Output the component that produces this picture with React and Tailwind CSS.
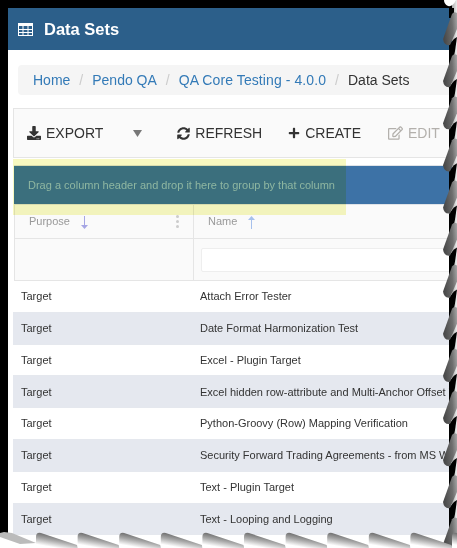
import { FaDownload, FaSyncAlt, FaPlus, FaRegEdit } from "react-icons/fa";

const rows = [
  "Attach Error Tester",
  "Date Format Harmonization Test",
  "Excel - Plugin Target",
  "Excel hidden row-attribute and Multi-Anchor Offset Value",
  "Python-Groovy (Row) Mapping Verification",
  "Security Forward Trading Agreements - from MS Word",
  "Text - Plugin Target",
  "Text - Looping and Logging",
];

// torn paper edge along the right and bottom of the shot
function TornEdge() {
  const rightTips = Array.from({ length: 13 }, (_, i) => 43 + i * 42.1);
  const bottomTips = Array.from({ length: 11 }, (_, i) => 36 + i * 41.6);
  return (
    <svg className="absolute left-0 top-0 pointer-events-none" width="457" height="548">
      <defs>
        <linearGradient id="tornR" x1="0" x2="1" y1="0.2" y2="0">
          <stop offset="0" stopColor="#4a4a4a" />
          <stop offset="0.6" stopColor="#6e6e6e" />
          <stop offset="1" stopColor="#a8a8a8" />
        </linearGradient>
        <linearGradient id="tornB" x1="0.5" x2="0" y1="0" y2="1">
          <stop offset="0.2" stopColor="#777" />
          <stop offset="0.45" stopColor="#aaa" />
          <stop offset="0.8" stopColor="#fff" />
        </linearGradient>
        <linearGradient id="sideR" x1="0" x2="1">
          <stop offset="0" stopColor="#aaa" />
          <stop offset="1" stopColor="#eee" />
        </linearGradient>
      </defs>

      <rect x="452" y="0" width="5" height="548" fill="url(#sideR)" />
      <path d="M444 0 H456 Q453 7 448 6 Q444 4 444 0 Z" fill="#fff" />
      <rect x="449" y="8" width="5" height="10" fill="#000" />

      {rightTips.map((y) => (
        <g key={y}>
          <path d={`M449 ${y + 30} L449 ${y + 2} L454 ${y - 4} L457 ${y - 6} L455 ${y + 8} L452 ${y + 22} Z`} fill="#000" />
          <path
            d={`M443 ${y - 4} L452 ${y - 29} Q454 ${y - 32} 457 ${y - 30} L457 ${y - 14} L450 ${y + 2} Q444 ${y + 3} 443 ${y - 4} Z`}
            fill="url(#tornR)"
          />
        </g>
      ))}

      <path d="M0 533 L8 533 L36 544 L36 548 L0 548 Z" fill="#fff" />
      <path d="M4 532 L12 533 L36 543 L20 544 L0 537 L0 533 Z" fill="#bbb" />
      {bottomTips.map((x) => (
        <path
          key={x}
          d={`M${x} 537 Q${x} 532 ${x + 5} 533 L${x + 41} 545 L${x + 42} 548 L${x} 548 Z`}
          fill="url(#tornB)"
        />
      ))}
    </svg>
  );
}

function ToolBtn({ icon, label, muted }) {
  return (
    <span className={`flex items-center gap-[5px] ${muted ? "text-[#b3b0ac]" : "text-[#333]"}`}>
      {icon}
      {label}
    </span>
  );
}

function TableIcon() {
  return (
    <svg width="15" height="13" viewBox="0 0 15 13" className="shrink-0">
      <rect x="0.5" y="0.5" width="14" height="12" fill="none" stroke="#fff" />
      <rect x="0" y="0" width="15" height="3" fill="#fff" />
      <path d="M5 3V13M10 3V13M0 6.5H15M0 9.5H15" stroke="#fff" fill="none" />
    </svg>
  );
}

function SortArrow({ up, color }) {
  return (
    <svg width="9" height="13" viewBox="0 0 9 13" className={up ? "" : "rotate-180"}>
      <path d="M4.5 1V13" stroke={color} strokeWidth="1" />
      <path d="M4.5 0L8 4H1Z" fill={color} />
    </svg>
  );
}

export default function App() {
  return (
    <div className="relative w-[457px] h-[548px] overflow-hidden bg-black pl-2 pt-2 font-['Liberation_Sans',sans-serif]">
      <div className="w-[449px] h-[540px] bg-white overflow-hidden">
        <div className="h-[42px] bg-[#2c5f8a] flex items-center pl-[10px] gap-[11px] text-white">
          <TableIcon />
          <span className="text-[16.5px] font-bold">Data Sets</span>
        </div>

        <div className="ml-[10px] mt-[15px] h-[30px] w-[480px] bg-[#f5f5f5] rounded flex items-center pl-[15px] text-[14px] text-[#337ab7] whitespace-nowrap">
          <span>Home</span>
          <span className="text-[#ccc] px-[9px]">/</span>
          <span>Pendo QA</span>
          <span className="text-[#ccc] px-[9px]">/</span>
          <span className="tracking-[0.09px]">QA Core Testing - 4.0.0</span>
          <span className="text-[#ccc] px-[9px]">/</span>
          <span className="text-[#333]">Data Sets</span>
        </div>

        <div className="ml-[5px] mt-[13px] w-[500px] h-[50px] bg-[#fafafa] border border-[#e5e5e5] flex items-center pl-[13px] text-[14px] whitespace-nowrap">
          <ToolBtn icon={<FaDownload className="w-[14px] h-[14px]" />} label="EXPORT" />
          <svg className="ml-[30px]" width="9" height="7" viewBox="0 0 9 7"><path d="M0 0H9L4.5 7Z" fill="#777" /></svg>
          <span className="ml-[35px]"><ToolBtn icon={<FaSyncAlt className="w-[13px] h-[13px]" />} label="REFRESH" /></span>
          <span className="ml-[26px]"><ToolBtn icon={<FaPlus className="w-[12px] h-[12px]" />} label="CREATE" /></span>
          <span className="ml-[27px]"><ToolBtn icon={<FaRegEdit className="w-[15px] h-[14px]" />} label="EDIT" muted /></span>
        </div>

        <div className="ml-[6px] mt-[7px] w-[500px] h-[40px] bg-[#3d72a6] flex items-center pl-[14px] text-[11px] text-[#93bcd6] border-y border-[#dfe3e8]">
          Drag a column header and drop it here to group by that column
        </div>

        <div className="ml-[6px] w-[500px] bg-[#fafafa] text-[11px] text-[#999]">
          <div className="flex h-[34px] border-b border-[#e5e5e5]">
            <div className="w-[180px] border-r border-l border-[#e5e5e5] flex items-center pl-[14px] relative">
              Purpose
              <span className="ml-[10px] mt-[2px] flex"><SortArrow color="#a6a6e4" /></span>
              <span className="absolute right-[14px] top-[10px] flex flex-col gap-[2px]">
                <i className="w-[3px] h-[3px] rounded-full bg-[#ccc]" />
                <i className="w-[3px] h-[3px] rounded-full bg-[#ccc]" />
                <i className="w-[3px] h-[3px] rounded-full bg-[#ccc]" />
              </span>
            </div>
            <div className="flex items-center pl-[14px]">
              Name
              <span className="ml-[10px] mt-[2px] flex"><SortArrow up color="#a6c0ec" /></span>
            </div>
          </div>
          <div className="flex h-[42px] border-b border-[#e5e5e5]">
            <div className="w-[180px] border-r border-l border-[#e5e5e5]" />
            <div className="flex-1 flex items-center pl-[7px]">
              <div className="w-[300px] h-[24px] bg-white border border-[#eee] rounded-[2px]" />
            </div>
          </div>
        </div>

        <div className="text-[11px] text-[#333] whitespace-nowrap ml-[5px]">
          {rows.map((name, i) => (
            <div key={name} className={`flex h-[31.8px] items-center pl-[8px] border-b border-[#e5e8ee] ${i % 2 ? "bg-[#e5e8ef]" : "bg-white"}`}>
              <span className="w-[179px] shrink-0">Target</span>
              <span>{name}</span>
            </div>
          ))}
          <div className="h-[12px]" />
        </div>
      </div>

      <div className="absolute left-[13px] top-[159px] w-[333px] h-[56px] bg-[#f7f8c0] mix-blend-multiply" />
      <TornEdge />
    </div>
  );
}
